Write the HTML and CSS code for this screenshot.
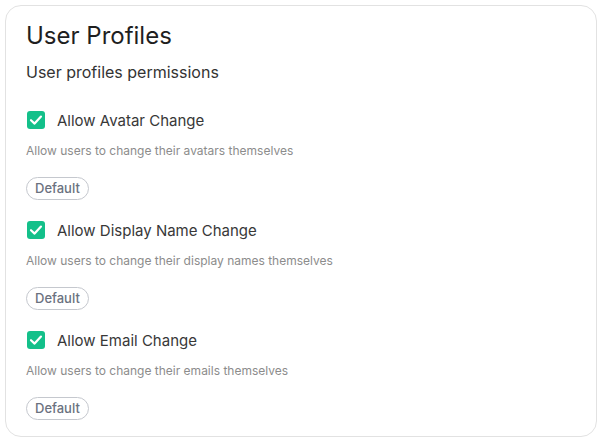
FILE: index.html
```html
<!DOCTYPE html>
<html>
<head>
<meta charset="utf-8">
<link rel="stylesheet" href="styles.css">
</head>
<body>
<div class="card">
  <h1 class="title">User Profiles</h1>
  <p class="subtitle">User profiles permissions</p>
  <div class="items">
    <div class="item">
      <div class="row">
        <span class="check"><svg width="18" height="18" viewBox="0 0 18 18"><polyline points="4,9.2 7.6,12.6 14,5.6" fill="none" stroke="#fff" stroke-width="2.2" stroke-linecap="round" stroke-linejoin="round"/></svg></span>
        <span class="label">Allow Avatar Change</span>
      </div>
      <p class="desc">Allow users to change their avatars themselves</p>
      <span class="badge">Default</span>
    </div>
    <div class="item">
      <div class="row">
        <span class="check"><svg width="18" height="18" viewBox="0 0 18 18"><polyline points="4,9.2 7.6,12.6 14,5.6" fill="none" stroke="#fff" stroke-width="2.2" stroke-linecap="round" stroke-linejoin="round"/></svg></span>
        <span class="label">Allow Display Name Change</span>
      </div>
      <p class="desc">Allow users to change their display names themselves</p>
      <span class="badge">Default</span>
    </div>
    <div class="item">
      <div class="row">
        <span class="check"><svg width="18" height="18" viewBox="0 0 18 18"><polyline points="4,9.2 7.6,12.6 14,5.6" fill="none" stroke="#fff" stroke-width="2.2" stroke-linecap="round" stroke-linejoin="round"/></svg></span>
        <span class="label">Allow Email Change</span>
      </div>
      <p class="desc">Allow users to change their emails themselves</p>
      <span class="badge">Default</span>
    </div>
  </div>
</div>
</body>
</html>
```
FILE: styles.css
```css
html, body {
  margin: 0;
  padding: 0;
  background: #ffffff;
}
body {
  font-family: Inter, "Noto Sans", sans-serif;
  color: #222;
}
.card {
  margin: 5px;
  border: 1px solid #e2e2e2;
  border-radius: 16px;
  padding: 14px 20px 16px 20px;
  height: 400px;
  box-sizing: content-box;
}
.title {
  margin: 0;
  font-size: 24px;
  line-height: 32px;
  font-weight: 400;
  color: #1f1f1f;
}
.subtitle {
  margin: 8px 0 0 0;
  font-size: 16px;
  line-height: 24px;
  color: #333;
}
.items {
  display: flex;
  flex-direction: column;
  gap: 18px;
  margin-top: 24px;
}
.item {
  display: flex;
  flex-direction: column;
  align-items: flex-start;
}
.row {
  display: flex;
  align-items: center;
  height: 24px;
  gap: 12px;
}
.check {
  width: 18px;
  height: 18px;
  margin-left: 1px;
  border-radius: 3px;
  background: #13c08a;
  display: flex;
}
.label {
  font-size: 15px;
  color: #383838;
}
.desc {
  margin: 10px 0 17px 0;
  font-size: 12px;
  line-height: 18px;
  color: #8c8c8c;
}
.badge {
  box-sizing: border-box;
  height: 23px;
  padding: 0 8px;
  border: 1px solid #c5c8ce;
  border-radius: 12px;
  font-size: 13px;
  font-weight: 500;
  line-height: 21px;
  color: #6b7280;
}
```
